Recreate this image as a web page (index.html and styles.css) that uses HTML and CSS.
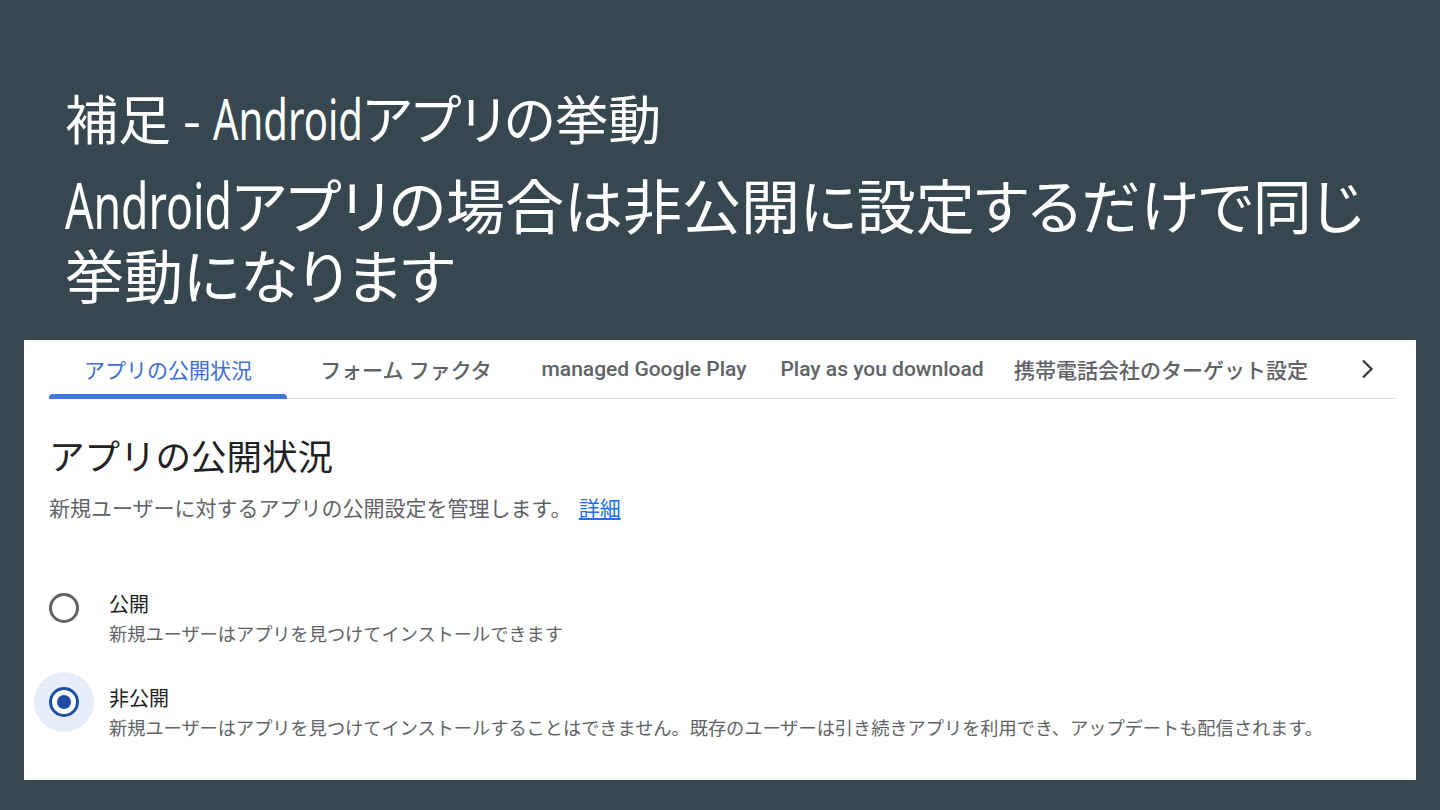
FILE: index.html
```html
<!DOCTYPE html>
<html lang="ja">
<head>
  <meta charset="UTF-8" />
  <meta name="viewport" content="width=device-width, initial-scale=1.0"/>
  <title>補足 - Androidアプリの挙動</title>
  <link rel="stylesheet" href="styles.css">
</head>
<body>
  <div class="slide">
    <div class="slide-head">
      <h1 class="slide-title">補足 - <span class="latin">Android</span>アプリの挙動</h1>
      <p class="slide-lead"><span class="latin">Android</span>アプリの場合は非公開に設定するだけで同じ</p>
      <p class="slide-lead">挙動になります</p>
    </div>

    <div class="panel">
      <div class="tabs">
        <div class="tab active">アプリの公開状況</div>
        <div class="tab">フォーム ファクタ</div>
        <div class="tab">managed Google Play</div>
        <div class="tab">Play as you download</div>
        <div class="tab">携帯電話会社のターゲット設定</div>
        <div class="tab-next">
          <svg width="24" height="24" viewBox="0 0 24 24">
            <polyline points="8,3.5 16.5,12 8,20.5" fill="none" stroke="#3c4043" stroke-width="2.4"/>
          </svg>
        </div>
      </div>

      <h2 class="section-title">アプリの公開状況</h2>
      <p class="section-desc">新規ユーザーに対するアプリの公開設定を管理します。 <a href="#">詳細</a></p>

      <div class="options">
        <div class="option">
          <span class="radio"></span>
          <div class="option-text">
            <div class="option-label">公開</div>
            <div class="option-help">新規ユーザーはアプリを見つけてインストールできます</div>
          </div>
        </div>
        <div class="option">
          <span class="radio checked"></span>
          <div class="option-text">
            <div class="option-label">非公開</div>
            <div class="option-help">新規ユーザーはアプリを見つけてインストールすることはできません。既存のユーザーは引き続きアプリを利用でき、アップデートも配信されます。</div>
          </div>
        </div>
      </div>
    </div>
  </div>
</body>
</html>
```

FILE: styles.css
```css
* {
  box-sizing: border-box;
  margin: 0;
  padding: 0;
}

body {
  width: 1440px;
  height: 810px;
  overflow: hidden;
  background: #37474f;
  font-family: Roboto, 'Noto Sans CJK JP', sans-serif;
}

.slide {
  height: 810px;
  display: flex;
  flex-direction: column;
}

.slide-head {
  padding: 84px 0 0 65px;
  height: 340px;
  color: #fff;
  font-family: 'Noto Sans CJK JP', sans-serif;
  font-feature-settings: "palt";
  white-space: nowrap;
}

/* no condensed face installed: squeeze the latin word instead */
.slide-head .latin {
  display: inline-block;
  font-family: 'Noto Sans', sans-serif;
  font-size: 1.08em;
  line-height: 1;
  transform: scaleX(0.7);
  transform-origin: left center;
  margin-right: -1.13em;
}

.slide-title {
  font-size: 53px;
  font-weight: 400;
  line-height: 66px;
  margin-bottom: 19px;
}

.slide-lead {
  font-size: 59px;
  line-height: 70px;
}

.panel {
  margin: 0 24px;
  height: 440px;
  background: #fff;
  padding: 0 21px 0 25px;
}

.tabs {
  display: flex;
  align-items: stretch;
  height: 59px;
  border-bottom: 1px solid #dadce0;
}

.tab {
  position: relative;
  min-width: 238px;
  padding: 0 13px;
  display: flex;
  align-items: center;
  justify-content: center;
  font-size: 21px;
  color: #5f6368;
  font-weight: 500;
  white-space: nowrap;
}

.tab.active {
  color: #3c70d4;
  font-weight: 400;
}

.tab.active::after {
  content: "";
  position: absolute;
  left: 0;
  right: 0;
  bottom: -1px;
  height: 5px;
  border-radius: 4px 4px 0 0;
  background: #3b78e0;
}

.tab-next {
  margin-left: auto;
  width: 56px;
  display: flex;
  align-items: center;
  justify-content: center;
}

.section-title {
  margin-top: 37px;
  font-size: 35.5px;
  line-height: 44px;
  font-weight: 400;
  color: #202124;
}

.section-desc {
  margin-top: 15px;
  font-size: 21px;
  line-height: 28px;
  color: #5f6368;
}

.section-desc a {
  margin-left: 2px;
  color: #1a73e8;
}

.options {
  margin-top: 69px;
  display: flex;
  flex-direction: column;
  gap: 38px;
}

.option {
  display: flex;
  gap: 30px;
}

.radio {
  flex: none;
  width: 30px;
  height: 30px;
  margin-top: 1px;
  border: 3px solid #5f6368;
  border-radius: 50%;
  display: flex;
  align-items: center;
  justify-content: center;
}

.radio.checked {
  border-color: #1d4fa8;
  box-shadow: 0 0 0 15px #e7edf8;
}

.radio.checked::after {
  content: "";
  width: 14px;
  height: 14px;
  border-radius: 50%;
  background: #1d4fa8;
}

.option-label {
  font-size: 20px;
  line-height: 26px;
  color: #202124;
}

.option-help {
  margin-top: 4px;
  font-size: 18.2px;
  line-height: 26px;
  color: #5f6368;
}
```
